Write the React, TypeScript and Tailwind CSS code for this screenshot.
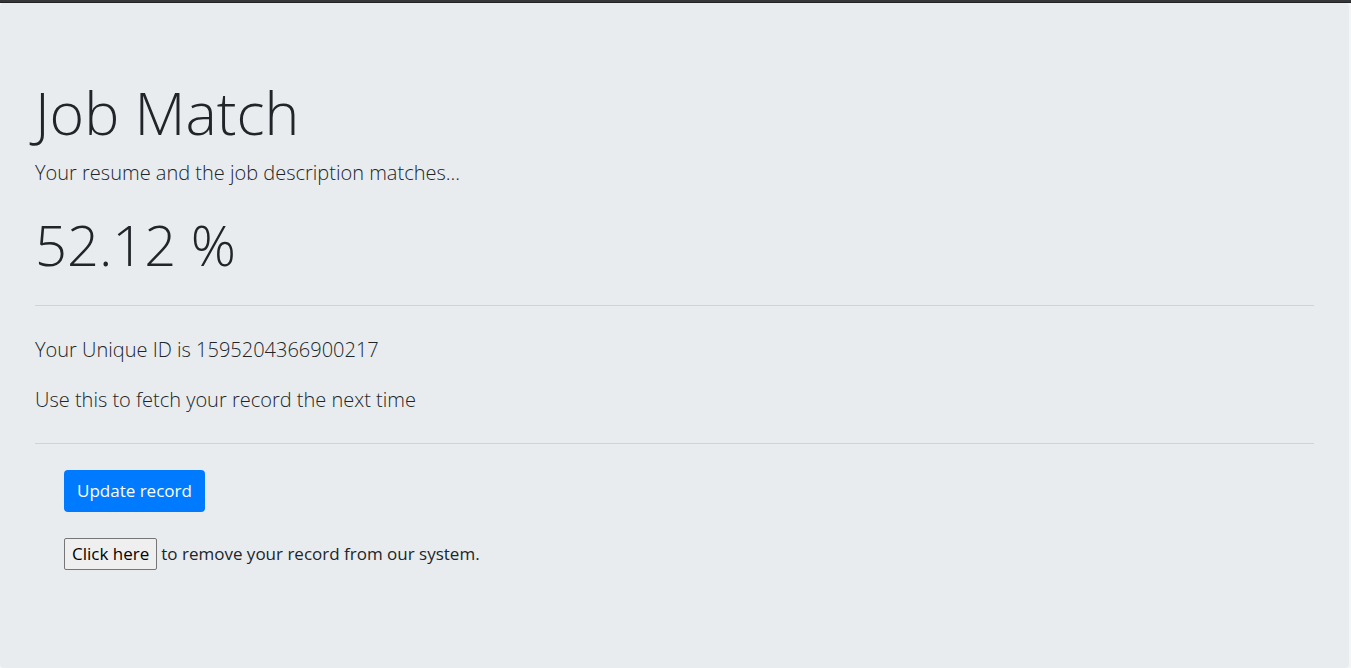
export default function App() {
  return (
    <div className="flex min-h-screen flex-col bg-[#f4f5f6] pr-0.5 font-['Open_Sans',sans-serif] text-[#212529]">
      <header className="-mr-0.5 h-[3px] border-b border-[#212224] bg-[#363738]" />
      <main className="grow rounded bg-[#e8ecef] px-[35px] pt-[74px] pb-20">
        <h1 className="text-[59px] leading-[70px] font-light">Job Match</h1>
        <p className="mt-2.5 text-xl leading-8 font-light">Your resume and the job description matches...</p>
        <h2 className="mt-5 text-[56px] leading-[70px] font-light">52.12 %</h2>
        <hr className="mt-[26px] border-[#cfd3d6]" />
        <p className="mt-7 text-xl leading-8 font-light">Your Unique ID is 1595204366900217</p>
        <p className="mt-[18px] text-xl leading-8 font-light">Use this to fetch your record the next time</p>
        <hr className="mt-[27px] border-[#cfd3d6]" />
        <div className="mt-[26px] pl-[29px] text-[17px]">
          <button type="button" className="h-[42px] rounded bg-[#007bff] px-[13px] text-white">Update record</button>
          <div className="mt-[26px] flex items-center gap-1">
            <button type="button" className="h-8 rounded-xs border border-[#767676] bg-[#efefef] px-[7px] text-black">Click here</button>
            <span>to remove your record from our system.</span>
          </div>
        </div>
      </main>
    </div>
  );
}
